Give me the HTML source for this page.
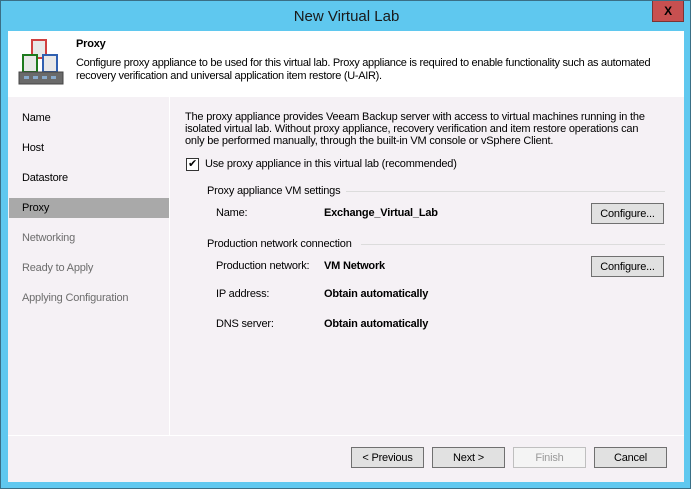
<!DOCTYPE html>
<html><head><style>
*{margin:0;padding:0;box-sizing:border-box}
body{width:691px;height:489px;background:#5fc8ef;border:1px solid #3a6f86;position:relative;font-family:"Liberation Sans",sans-serif;font-size:11px;color:#000;overflow:hidden;letter-spacing:-0.2px}
.t{position:absolute}
.title{left:0;top:7px;width:691px;text-align:center;font-size:15px;color:#1a1a1a;letter-spacing:0}
.close{left:651px;top:0;width:32px;height:21px;background:#c75050;border:1px solid #7a3434;border-top:none;color:#000;font-weight:bold;text-align:center;line-height:20px;font-size:12px}
.client{left:7px;top:30px;width:676px;height:451px;background:#f5f1f5}
.hdr{left:7px;top:30px;width:676px;height:66px;background:#fff}
.btn{position:absolute;top:446px;width:73px;height:21px;border:1px solid #707070;background:#e1e1e1;text-align:center;line-height:20px;font-size:11px}
.nav{position:absolute;left:21px;font-size:11px}
</style></head><body>
<div class="t title">New Virtual Lab</div>
<div class="t close">X</div>
<div class="t client"></div>
<div class="t hdr"></div>
<svg class="t" style="left:16px;top:37px" width="50" height="50">
<rect x="15" y="2" width="14" height="18" fill="#e8e8e8" stroke="#d04040" stroke-width="2"/>
<rect x="6" y="17" width="14" height="17" fill="#e8e8e8" stroke="#1e7a1e" stroke-width="2"/>
<rect x="26" y="17" width="14" height="17" fill="#e8e8e8" stroke="#3060b0" stroke-width="2"/>
<rect x="2" y="34" width="44" height="12" fill="#6a6a6a" stroke="#444"/>
<rect x="7" y="38" width="5" height="3" fill="#8ac"/><rect x="16" y="38" width="5" height="3" fill="#8ac"/><rect x="25" y="38" width="5" height="3" fill="#8ac"/><rect x="34" y="38" width="5" height="3" fill="#8ac"/>
</svg>
<div class="t" style="left:75px;top:37px;font-weight:bold">Proxy</div>
<div class="t" style="left:75px;top:56px;width:605px;line-height:13px;letter-spacing:-0.3px">Configure proxy appliance to be used for this virtual lab. Proxy appliance is required to enable functionality such as automated recovery verification and universal application item restore (U-AIR).</div>
<div class="t" style="left:168px;top:96px;width:1px;height:338px;background:#fff"></div>
<div class="t" style="left:7px;top:434px;width:676px;height:1px;background:#fff"></div>
<div class="nav" style="top:111px">Name</div>
<div class="nav" style="top:141px">Host</div>
<div class="nav" style="top:171px">Datastore</div>
<div class="t" style="left:8px;top:197px;width:160px;height:20px;background:#a9a9a9"></div>
<div class="nav" style="top:201px">Proxy</div>
<div class="nav" style="top:231px;color:#6d6d6d">Networking</div>
<div class="nav" style="top:261px;color:#6d6d6d">Ready to Apply</div>
<div class="nav" style="top:291px;color:#6d6d6d">Applying Configuration</div>
<div class="t" style="left:184px;top:110px;width:495px;line-height:12px">The proxy appliance provides Veeam Backup server with access to virtual machines running in the<br>isolated virtual lab. Without proxy appliance, recovery verification and item restore operations can<br>only be performed manually, through the built-in VM console or vSphere Client.</div>
<div class="t" style="left:185px;top:157px;width:13px;height:13px;border:1px solid #333;background:#fff;font-size:11px;line-height:11px;text-align:center">✔</div>
<div class="t" style="left:204px;top:157px">Use proxy appliance in this virtual lab (recommended)</div>
<div class="t" style="left:206px;top:184px">Proxy appliance VM settings</div>
<div class="t" style="left:345px;top:190px;width:319px;height:1px;background:#dcdcdc"></div>
<div class="t" style="left:215px;top:206px">Name:</div>
<div class="t" style="left:323px;top:206px;font-weight:bold">Exchange_Virtual_Lab</div>
<div class="btn" style="left:590px;top:202px">Configure...</div>
<div class="t" style="left:206px;top:237px">Production network connection</div>
<div class="t" style="left:360px;top:243px;width:304px;height:1px;background:#dcdcdc"></div>
<div class="t" style="left:215px;top:259px">Production network:</div>
<div class="t" style="left:323px;top:259px;font-weight:bold">VM Network</div>
<div class="btn" style="left:590px;top:255px">Configure...</div>
<div class="t" style="left:215px;top:287px">IP address:</div>
<div class="t" style="left:323px;top:287px;font-weight:bold">Obtain automatically</div>
<div class="t" style="left:215px;top:317px">DNS server:</div>
<div class="t" style="left:323px;top:317px;font-weight:bold">Obtain automatically</div>
<div class="btn" style="left:350px">&lt; Previous</div>
<div class="btn" style="left:431px">Next &gt;</div>
<div class="btn" style="left:512px;border-color:#bfbfbf;background:#f4f4f4;color:#9a9a9a">Finish</div>
<div class="btn" style="left:593px">Cancel</div>
</body></html>
